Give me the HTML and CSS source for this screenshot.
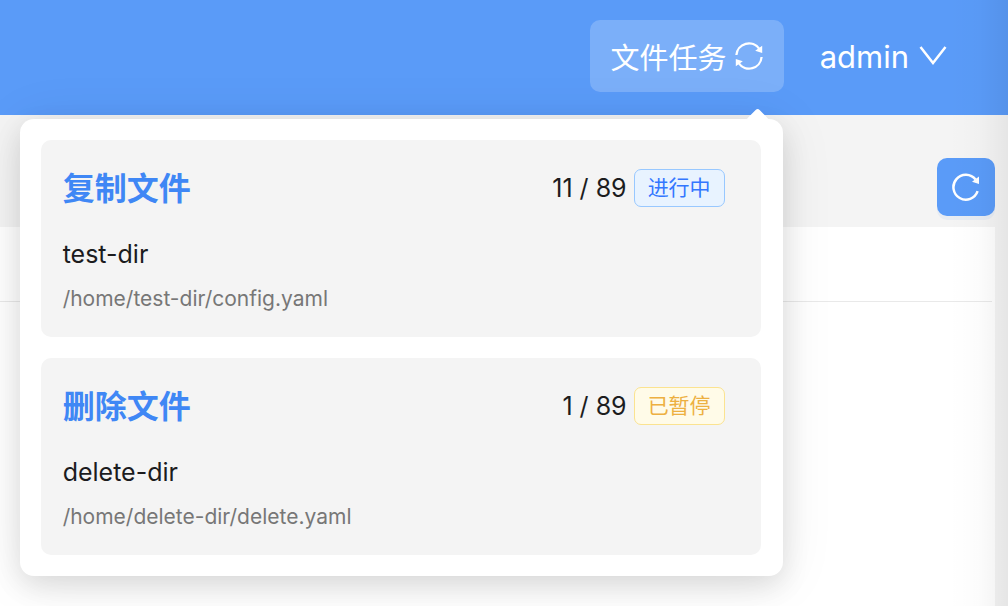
FILE: index.html
```html
<!DOCTYPE html>
<html lang="zh-CN">
<head>
<meta charset="utf-8">
<meta name="viewport" content="width=device-width, initial-scale=1">
<title>文件任务</title>
<link rel="stylesheet" href="styles.css">
</head>
<body>
<div class="page">
  <header class="topbar">
    <div class="task-menu">
      <button class="task-trigger" type="button" aria-expanded="true" aria-controls="tasks">
        <span>文件任务</span>
        <svg class="icon-sync" viewBox="0 0 28 28" aria-hidden="true">
          <path d="M1.4 13A12.6 12.6 0 0 1 24.3 6.8M26.6 15A12.6 12.6 0 0 1 3.7 21.2" fill="none" stroke="currentColor" stroke-width="2.3"/>
          <path d="M27.2 3.8v7.2l-7-2.2zM.8 24.2V17l7 2.2z" fill="currentColor"/>
        </svg>
      </button>
      <section class="popover" id="tasks" aria-label="文件任务">
        <article class="task">
          <div class="task-head">
            <h2 class="task-title">复制文件</h2>
            <span class="task-count">11 / 89</span>
            <span class="tag tag-running">进行中</span>
          </div>
          <p class="task-name">test-dir</p>
          <p class="task-path">/home/test-dir/config.yaml</p>
        </article>
        <article class="task">
          <div class="task-head">
            <h2 class="task-title">删除文件</h2>
            <span class="task-count">1 / 89</span>
            <span class="tag tag-paused">已暂停</span>
          </div>
          <p class="task-name">delete-dir</p>
          <p class="task-path">/home/delete-dir/delete.yaml</p>
        </article>
      </section>
    </div>
    <button class="user" type="button">
      <span>admin</span>
      <svg class="icon-down" viewBox="0 0 28 20" aria-hidden="true">
        <path d="M1.5 1L14 17 26.5 1" fill="none" stroke="currentColor" stroke-width="2.5"/>
      </svg>
    </button>
  </header>
  <main class="main">
    <div class="toolbar">
      <button class="refresh" type="button" aria-label="刷新">
        <svg class="icon-reload" viewBox="0 0 28 28" aria-hidden="true">
          <path d="M25.6 18.2A12.4 12.4 0 1 1 23.6 6.6" fill="none" stroke="currentColor" stroke-width="2.5"/>
          <path d="M27 3.6v7.4l-7-2.2z" fill="currentColor"/>
        </svg>
      </button>
    </div>
    <div class="panel"><div class="panel-head"></div></div>
  </main>
</div>
</body>
</html>
```
FILE: styles.css
```css
* {
  box-sizing: border-box;
}

body {
  margin: 0;
  font-family: Inter, "Noto Sans CJK SC", sans-serif;
  color: #1c1c1e;
}

button {
  border: 0;
  padding: 0;
  font: inherit;
  color: #fff;
  background: none;
  cursor: pointer;
}

h2,
p {
  margin: 0;
}

.page {
  position: relative;
  display: flex;
  flex-direction: column;
  min-height: 100vh;
  overflow: hidden;
  background: #f4f4f4;
}

/* soft shade along the right edge of the window */
.page::after {
  content: "";
  position: absolute;
  inset: 0 0 0 auto;
  width: 60px;
  background: linear-gradient(to right, transparent, rgba(0, 0, 0, 0.01) 50%, rgba(0, 0, 0, 0.06));
  pointer-events: none;
}

.topbar {
  display: flex;
  justify-content: flex-end;
  align-items: flex-start;
  gap: 36px;
  height: 115px;
  padding: 20px 61px 0 20px;
  background: #5a9bf8;
}

.task-menu {
  position: relative;
}

.task-trigger {
  display: flex;
  align-items: center;
  gap: 8px;
  height: 72px;
  padding: 0 21px;
  border-radius: 10px;
  font-size: 29px;
  background: rgba(255, 255, 255, 0.2);
}

.icon-sync,
.icon-reload {
  width: 28px;
  height: 28px;
}

.user {
  display: flex;
  align-items: center;
  gap: 10px;
  height: 72px;
  font-size: 31px;
}

.icon-down {
  width: 28px;
  height: 20px;
}

.popover {
  position: absolute;
  z-index: 2;
  top: 99px;
  right: 1px;
  display: flex;
  flex-direction: column;
  gap: 21px;
  width: 763px;
  padding: 21px 22px 21px 21px;
  border-radius: 14px;
  background: #fff;
  box-shadow: 0 10px 28px rgba(0, 0, 0, 0.11), 0 4px 56px rgba(0, 0, 0, 0.08);
}

.popover::before {
  content: "";
  position: absolute;
  top: -11px;
  right: 12px;
  width: 26px;
  height: 12px;
  background: #fff;
  clip-path: path("M0 12Q3 11 5 8L11 2Q13 0 15 2L21 8Q23 11 26 12Z");
}

.task {
  padding: 22px 36px 22px 22px;
  border-radius: 10px;
  background: #f4f4f4;
}

.task-head {
  display: flex;
  align-items: center;
  gap: 7px;
  height: 52px;
  margin-bottom: 20px;
}

.task-title {
  flex: 1;
  padding-bottom: 5px;
  font-size: 32px;
  font-weight: 600;
  color: #3f87f5;
}

.task-count {
  font-size: 25px;
}

.tag {
  padding: 0 13px;
  border: 1px solid;
  border-radius: 7px;
  font-size: 21px;
  line-height: 36px;
}

.tag-running {
  color: #3377ff;
  border-color: #98c8ff;
  background: #e8f3ff;
}

.tag-paused {
  color: #edb041;
  border-color: #fbe390;
  background: #fffbe8;
}

.task-name {
  margin-bottom: 8px;
  font-size: 25px;
  line-height: 41px;
}

.task-path {
  font-size: 21px;
  line-height: 32px;
  color: #777;
}

.main {
  display: flex;
  flex: 1;
  flex-direction: column;
  padding-right: 13px;
}

.toolbar {
  display: flex;
  justify-content: flex-end;
  align-items: flex-end;
  height: 112px;
  padding-bottom: 11px;
}

.refresh {
  display: flex;
  align-items: center;
  justify-content: center;
  width: 58px;
  height: 58px;
  border-radius: 10px;
  background: #5a9bf8;
  box-shadow: 0 4px 0 rgba(90, 155, 248, 0.08);
}

.panel {
  flex: 1;
  padding-right: 3px;
  background: #fff;
}

.panel-head {
  height: 75px;
  border-bottom: 1px solid #e9e9e9;
}
```
